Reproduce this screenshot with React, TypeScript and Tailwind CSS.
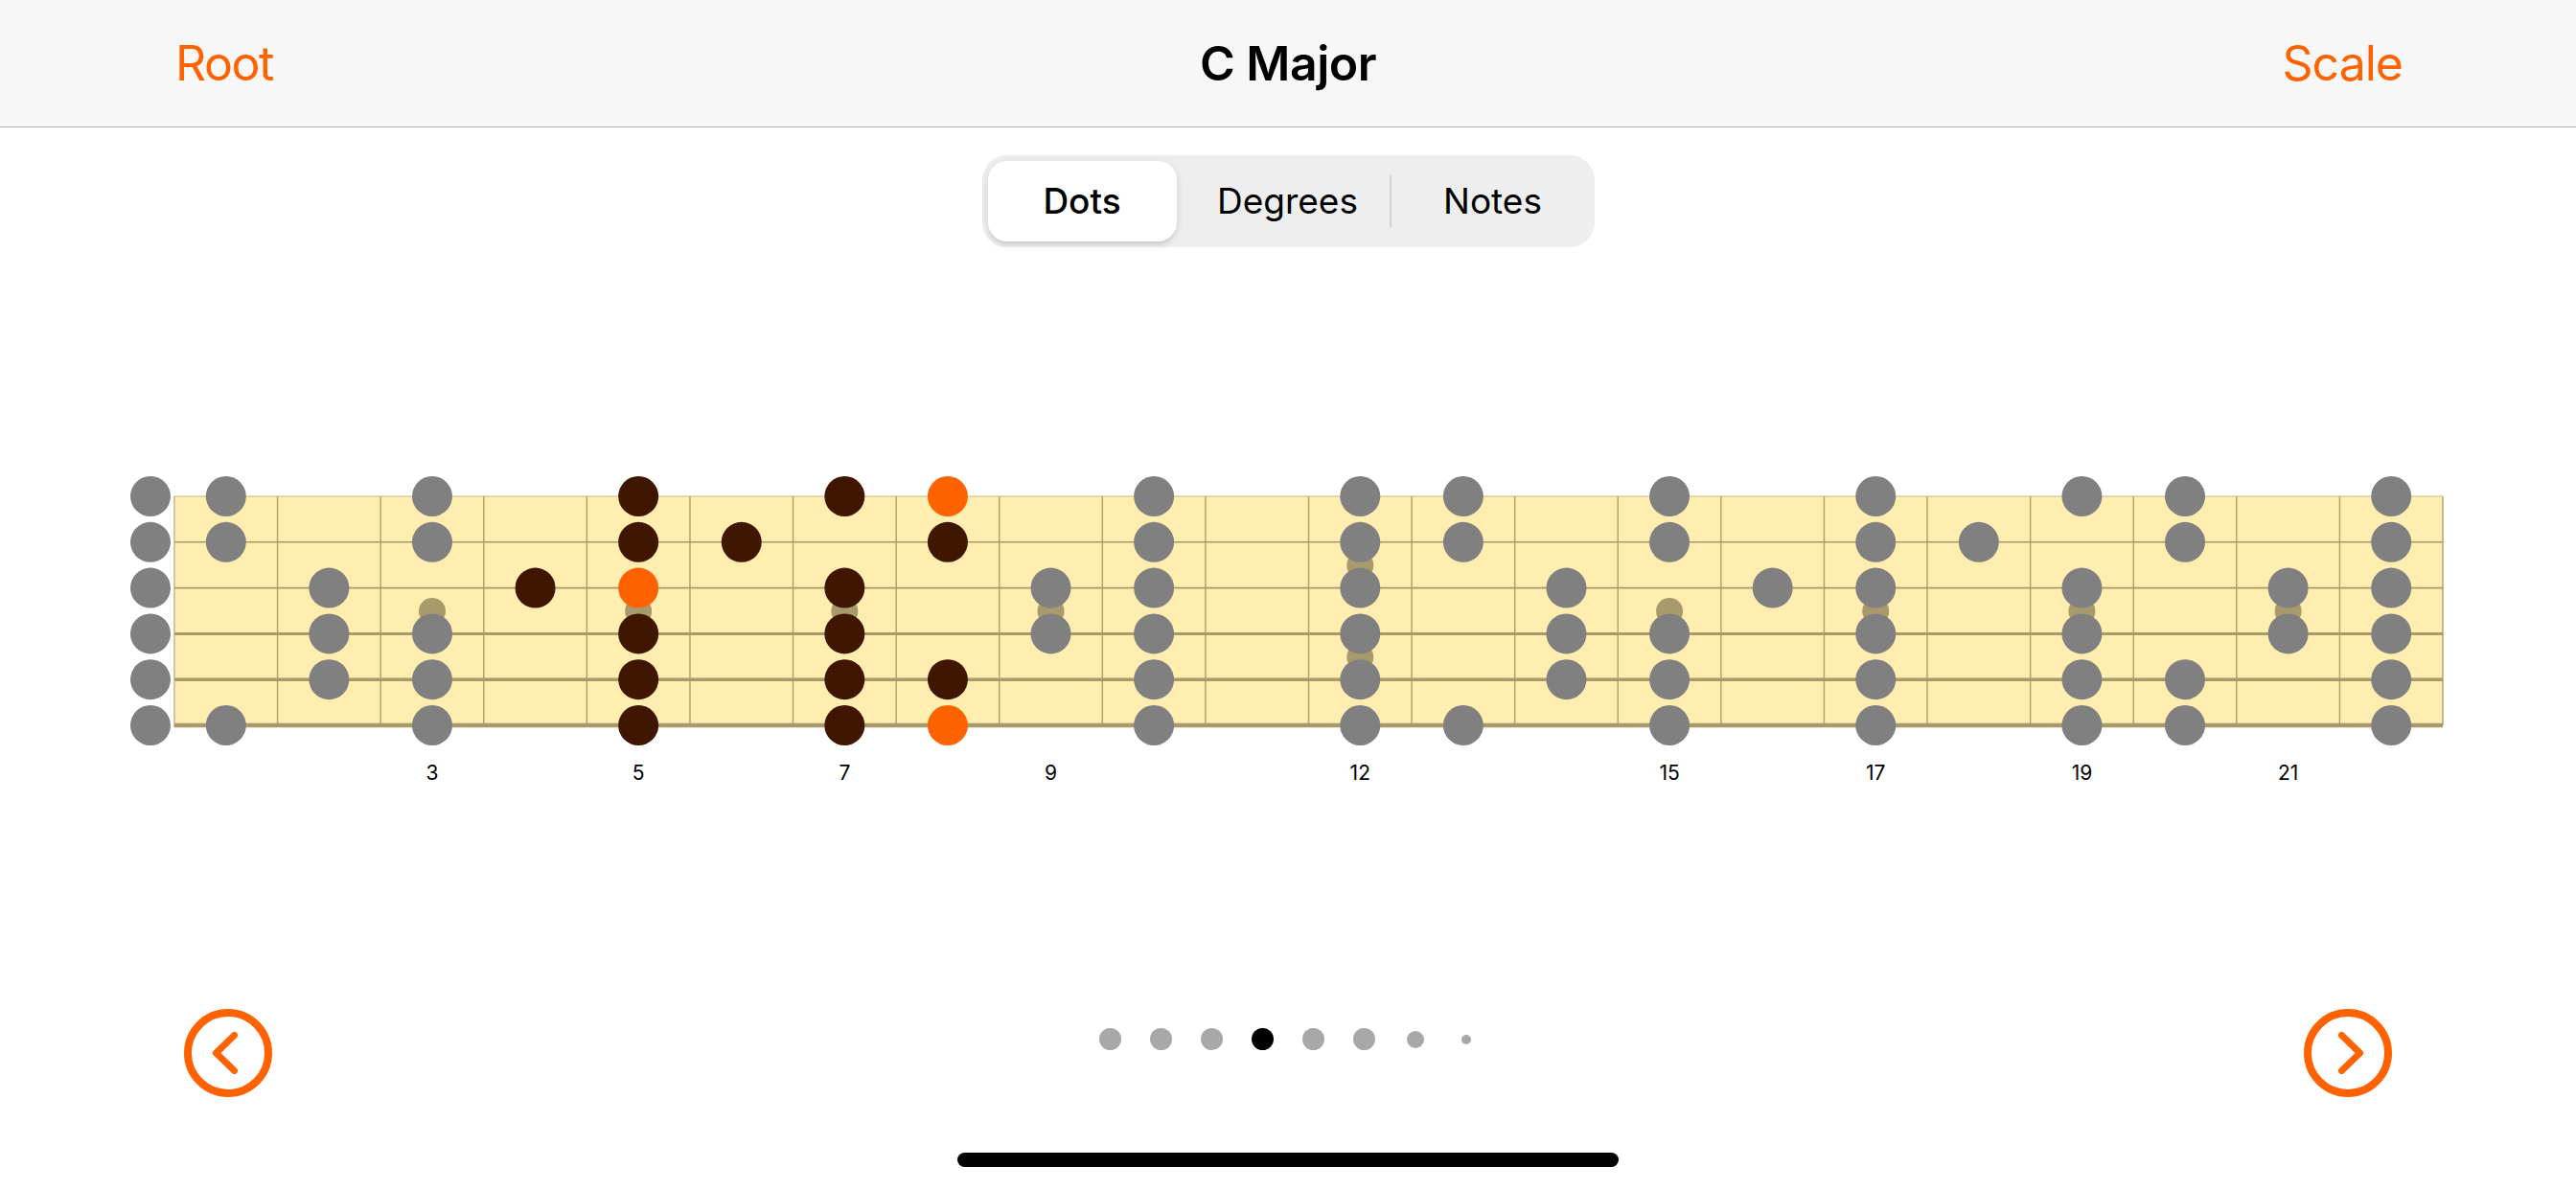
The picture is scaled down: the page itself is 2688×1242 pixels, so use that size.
import React from "react";

// fretboard geometry (page pixels)
const NUT_X = 182;
const END_X = 2549;
const FRETS = 22;
const FRET_W = (END_X - NUT_X) / FRETS;
const TOP_Y = 518;
const STRING_Y = [518, 565.8, 613.6, 661.4, 709.2, 757];
const STRING_W = [1.2, 1.4, 1.8, 3, 3.4, 4.4];
const TUNING = [4, 11, 7, 2, 9, 4]; // high E .. low E, semitones from C
const SCALE = [0, 2, 4, 5, 7, 9, 11];
const POSITION = [
  [5, 7, 8],
  [5, 6, 8],
  [4, 5, 7],
  [5, 7],
  [5, 7, 8],
  [5, 7, 8],
];
const INLAYS = [3, 5, 7, 9, 15, 17, 19, 21];
const NUMBERS = [3, 5, 7, 9, 12, 15, 17, 19, 21];

const fretX = (f: number) => (f === 0 ? 157 : NUT_X + (f - 0.5) * FRET_W);

type Dot = { x: number; y: number; color: string; key: string };

const buildDots = (): Dot[] => {
  const dots: Dot[] = [];
  TUNING.forEach((open, s) => {
    for (let f = 0; f <= FRETS; f++) {
      const note = (open + f) % 12;
      if (!SCALE.includes(note)) continue;
      const inPos = POSITION[s].includes(f);
      const color = inPos ? (note === 0 ? "#ff6200" : "#3f1600") : "#808080";
      dots.push({ x: fretX(f), y: STRING_Y[s], color, key: `${s}-${f}` });
    }
  });
  return dots;
};

const Fretboard = () => {
  const dots = buildDots();
  return (
    <svg
      className="block w-[2688px] h-[350px] mt-[222px]"
      viewBox="0 480 2688 350"
      width={2688}
      height={350}
    >
      <rect x={NUT_X} y={TOP_Y} width={END_X - NUT_X} height={241} fill="#ffeeb0" />
      {Array.from({ length: FRETS }, (_, i) => {
        const x = NUT_X + (i + 1) * FRET_W;
        return <line key={i} x1={x} x2={x} y1={TOP_Y} y2={757} stroke="#b1a370" strokeWidth={1.5} />;
      })}
      <line x1={NUT_X} x2={NUT_X} y1={TOP_Y} y2={759} stroke="#cfc7a5" strokeWidth={2} />
      {STRING_Y.map((y, i) => (
        <line
          key={i}
          x1={NUT_X}
          x2={END_X}
          y1={y}
          y2={y}
          stroke={i === 0 ? "#c4b98d" : "#a99a69"}
          strokeWidth={STRING_W[i]}
        />
      ))}
      {INLAYS.map((f) => (
        <circle key={f} cx={fretX(f)} cy={638} r={14} fill="#a89a6a" />
      ))}
      <circle cx={fretX(12)} cy={590} r={14} fill="#a89a6a" />
      <circle cx={fretX(12)} cy={686} r={14} fill="#a89a6a" />
      {dots.map((d) => (
        <circle key={d.key} cx={d.x} cy={d.y} r={21} fill={d.color} />
      ))}
      {NUMBERS.map((n) => (
        <text
          key={n}
          x={fretX(n)}
          y={806}
          textAnchor="middle"
          dominantBaseline="central"
          fontFamily="Inter, 'Noto Sans', sans-serif"
          fontSize={21}
          fill="#000"
        >
          {n}
        </text>
      ))}
    </svg>
  );
};

const CircleChevron = ({ dir }: { dir: "left" | "right" }) => (
  <svg width={92} height={92} viewBox="0 0 92 92" className="block">
    <circle cx={46} cy={46} r={42} fill="none" stroke="#ff6200" strokeWidth={8} />
    <path
      d={dir === "left" ? "M52.5 27.5 L33.5 46 L52.5 64.5" : "M39.5 27.5 L58.5 46 L39.5 64.5"}
      fill="none"
      stroke="#ff6200"
      strokeWidth={7}
      strokeLinecap="round"
      strokeLinejoin="round"
    />
  </svg>
);

const PAGE_DOTS = [23, 23, 23, 23, 23, 23, 18, 10];

const PageControl = () => (
  <div className="flex self-start mt-[20px]">
    {PAGE_DOTS.map((size, i) => (
      <div key={i} className="w-[53px] h-[23px] flex items-center justify-center">
        <div
          className={`rounded-full ${i === 3 ? "bg-black" : "bg-[#a8a8a8]"} ${
            size === 23 ? "w-[23px] h-[23px]" : size === 18 ? "w-[18px] h-[18px]" : "w-[10px] h-[10px]"
          }`}
        />
      </div>
    ))}
  </div>
);

const App = () => {
  return (
    <div className="w-[2688px] h-[1242px] bg-white overflow-hidden font-['Inter','Noto_Sans',sans-serif] text-black">
      <header className="h-[133px] bg-[#f7f7f7] border-b border-[#b2b2b2] grid grid-cols-[1fr_auto_1fr] items-center">
        <div className="pl-[183px] text-[50px] text-[#ff6200] tracking-[-0.03em]">Root</div>
        <div className="text-[50px] font-semibold tracking-[-0.01em]">C Major</div>
        <div className="pr-[181px] text-right text-[50px] text-[#ff6200] tracking-[-0.02em]">Scale</div>
      </header>

      <div className="mx-auto mt-[29px] flex items-center h-[96px] w-[639px] rounded-[26px] bg-[#eeeeef] text-[37px]">
        <div className="w-[213px] h-full pl-[6px] pr-[10px] py-[6px]">
          <div className="w-full h-full rounded-[20px] bg-white shadow-[0_3px_8px_rgba(0,0,0,0.12),0_3px_1px_rgba(0,0,0,0.04)] flex items-center justify-center font-medium">
            Dots
          </div>
        </div>
        <div className="w-[212px] h-full flex items-center justify-center">Degrees</div>
        <div className="w-[2px] h-[54px] bg-[#d2d2d6]" />
        <div className="w-[212px] h-full flex items-center justify-center">Notes</div>
      </div>

      <Fretboard />

      <div className="mt-[223px] h-[92px] px-[192px] flex items-center justify-between">
        <CircleChevron dir="left" />
        <PageControl />
        <CircleChevron dir="right" />
      </div>

      <div className="mx-auto mt-[58px] w-[690px] h-[15px] rounded-full bg-black" />
    </div>
  );
};

export default App;
